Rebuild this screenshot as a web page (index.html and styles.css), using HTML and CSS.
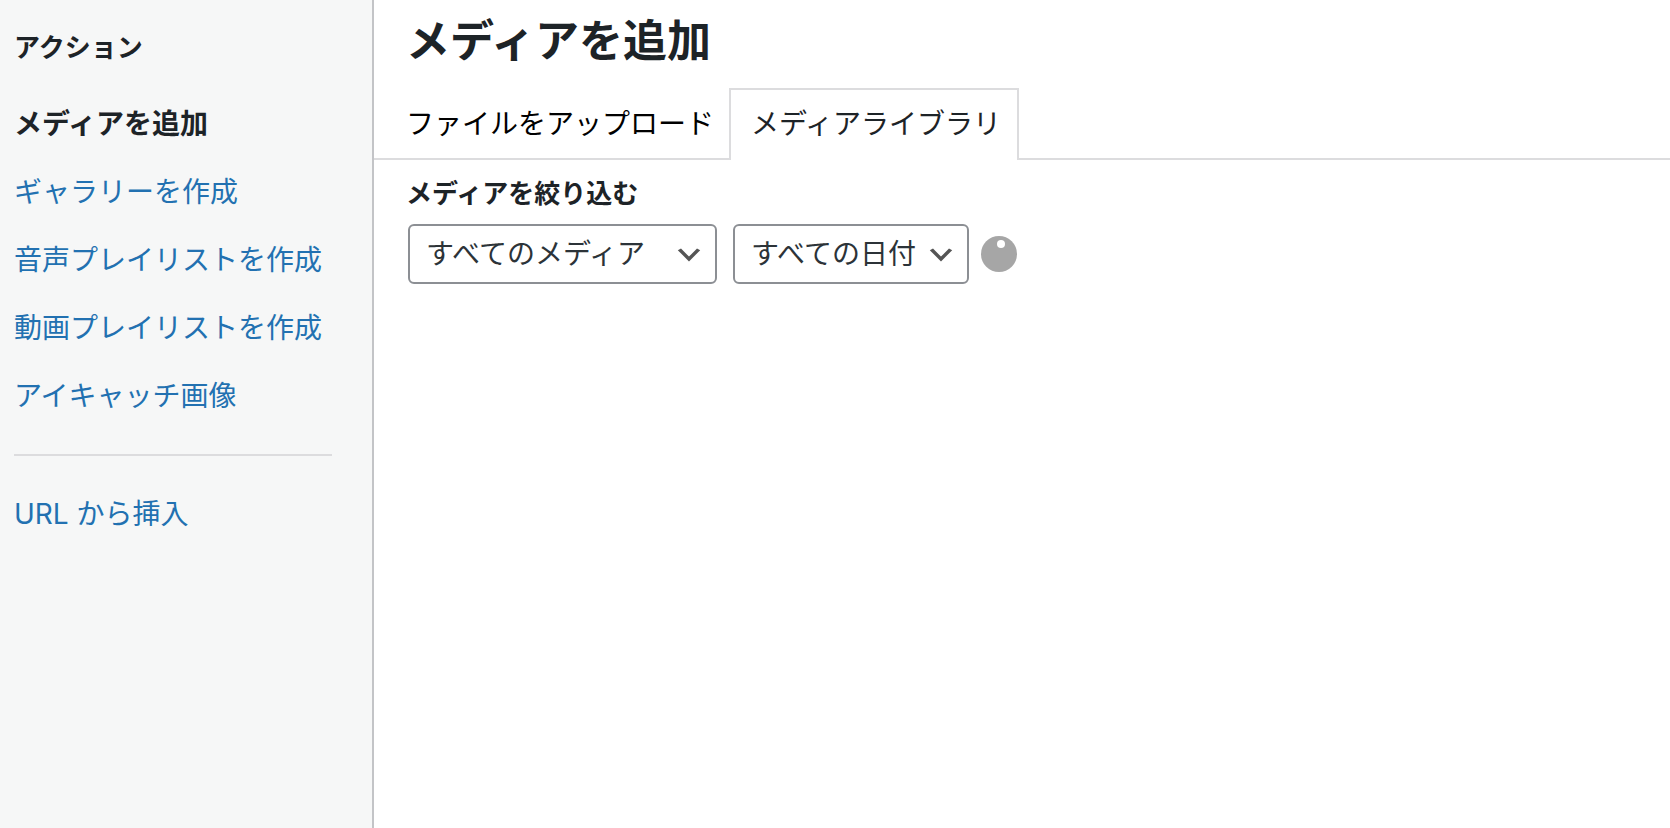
FILE: index.html
```html
<!DOCTYPE html>
<html lang="ja">
<head>
    <meta charset="UTF-8">
    <title>メディアを追加</title>
    <link rel="stylesheet" href="styles.css">
</head>
<body>
    <div class="media-frame">
        <nav class="media-menu">
            <h2 class="menu-heading">アクション</h2>
            <a href="#" class="menu-item active">メディアを追加</a>
            <a href="#" class="menu-item">ギャラリーを作成</a>
            <a href="#" class="menu-item">音声プレイリストを作成</a>
            <a href="#" class="menu-item">動画プレイリストを作成</a>
            <a href="#" class="menu-item">アイキャッチ画像</a>
            <hr class="separator">
            <a href="#" class="menu-item">URL から挿入</a>
        </nav>

        <main class="media-content">
            <h1 class="frame-title">メディアを追加</h1>
            <div class="router" role="tablist">
                <button type="button" class="tab" role="tab" aria-selected="false">ファイルをアップロード</button>
                <button type="button" class="tab active" role="tab" aria-selected="true">メディアライブラリ</button>
            </div>
            <div class="toolbar">
                <h2 class="filter-heading">メディアを絞り込む</h2>
                <div class="filters">
                    <div class="select-wrap">
                        <select class="filter type-filter" aria-label="タイプで絞り込む">
                            <option>すべてのメディア</option>
                        </select>
                        <svg class="arrow" viewBox="0 0 20 20" aria-hidden="true"><path d="M5 6l5 5 5-5 2 1-7 7-7-7 2-1z"/></svg>
                    </div>
                    <div class="select-wrap">
                        <select class="filter date-filter" aria-label="日付で絞り込む">
                            <option>すべての日付</option>
                        </select>
                        <svg class="arrow" viewBox="0 0 20 20" aria-hidden="true"><path d="M5 6l5 5 5-5 2 1-7 7-7-7 2-1z"/></svg>
                    </div>
                    <svg class="spinner" viewBox="0 0 36 36" aria-hidden="true"><circle cx="18" cy="18" r="18" fill="#a6a6a6"/><circle cx="20" cy="8" r="4" fill="#fff"/></svg>
                </div>
            </div>
        </main>
    </div>
</body>
</html>
```

FILE: styles.css
```css
* {
    box-sizing: border-box;
}
body {
    margin: 0;
    background: #fff;
    color: #1d2327;
    font-family: Inter, "Noto Sans CJK JP", sans-serif;
    font-size: 28px;
    line-height: 36px;
}
h1, h2 {
    margin: 0;
}
.media-frame {
    display: flex;
    min-height: 100vh;
}
.media-menu {
    flex: 0 0 374px;
    padding: 30px 40px 20px 14px;
    background: #f6f7f7;
    border-right: 2px solid #c3c4c7;
}
.menu-heading {
    margin-bottom: 24px;
    font-size: 26px;
}
.menu-item {
    display: block;
    padding: 16px 0;
    color: #2271b1;
    text-decoration: none;
    white-space: nowrap;
}
.menu-item.active {
    color: #1d2327;
    font-weight: 700;
}
.separator {
    margin: 24px 0;
    border: 0;
    border-top: 2px solid #dcdcde;
}
.media-content {
    flex: 1;
    min-width: 0;
}
.frame-title {
    padding: 9px 32px 15px;
    font-size: 44px;
    line-height: 64px;
}
.router {
    display: flex;
    padding: 0 10px;
    border-bottom: 2px solid #dcdcde;
}
.tab {
    height: 72px;
    margin: 0 -3px -2px 0;
    padding: 0 16px 2px 20px;
    background: none;
    border: 2px solid transparent;
    border-bottom: 0;
    color: #000;
    font: inherit;
    cursor: pointer;
}
.tab.active {
    background: #fff;
    border-color: #dcdcde;
    color: #1d2327;
}
.toolbar {
    padding: 16px 34px;
}
.filter-heading {
    margin: 0 -2px 12px;
    font-size: 26px;
}
.filters {
    display: flex;
    align-items: center;
}
.select-wrap {
    position: relative;
    margin-right: 16px;
}
.filter {
    appearance: none;
    display: block;
    height: 60px;
    padding: 0 48px 0 16px;
    background: #fff;
    border: 2px solid #8c8f94;
    border-radius: 6px;
    color: #2c3338;
    font: inherit;
}
.type-filter {
    width: 309px;
}
.date-filter {
    width: 236px;
}
.arrow {
    position: absolute;
    top: 15px;
    right: 12px;
    width: 32px;
    height: 32px;
    fill: #555;
    pointer-events: none;
}
.spinner {
    width: 36px;
    height: 36px;
    margin-left: -4px;
}
```
